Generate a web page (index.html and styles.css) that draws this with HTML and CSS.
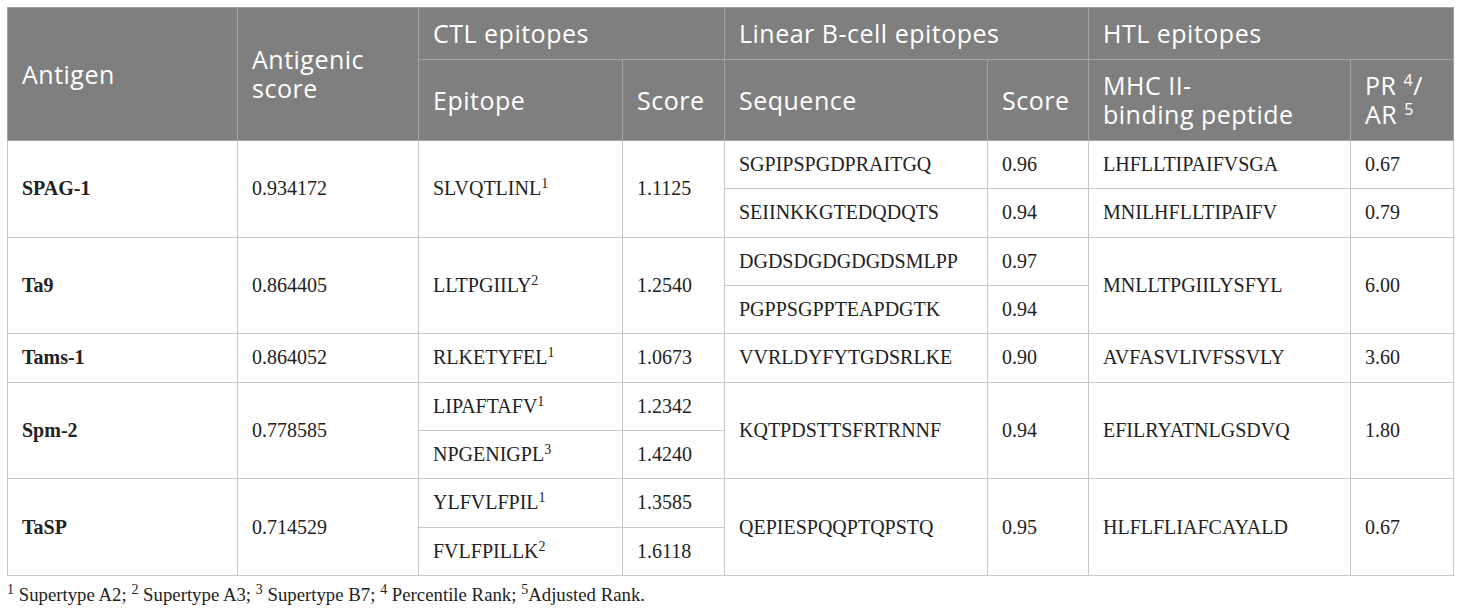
FILE: index.html
```html
<!DOCTYPE html>
<html>
<head>
<meta charset="utf-8">
<link rel="stylesheet" href="styles.css">
</head>
<body>
<div class="wrap">
<table class="tbl">
  <colgroup>
    <col class="c1"><col class="c2"><col class="c3"><col class="c4"><col class="c5"><col class="c6"><col class="c7"><col class="c8">
  </colgroup>
  <thead>
    <tr class="h1">
      <th rowspan="2">Antigen</th>
      <th rowspan="2">Antigenic score</th>
      <th colspan="2">CTL epitopes</th>
      <th colspan="2">Linear B-cell epitopes</th>
      <th colspan="2">HTL epitopes</th>
    </tr>
    <tr class="h2">
      <th>Epitope</th>
      <th>Score</th>
      <th>Sequence</th>
      <th>Score</th>
      <th>MHC II-<br>binding peptide</th>
      <th>PR <sup>4</sup>/ AR <sup>5</sup></th>
    </tr>
  </thead>
  <tbody>
    <tr>
      <td rowspan="2" class="b">SPAG-1</td>
      <td rowspan="2">0.934172</td>
      <td rowspan="2">SLVQTLINL<sup>1</sup></td>
      <td rowspan="2">1.1125</td>
      <td>SGPIPSPGDPRAITGQ</td>
      <td>0.96</td>
      <td>LHFLLTIPAIFVSGA</td>
      <td>0.67</td>
    </tr>
    <tr>
      <td>SEIINKKGTEDQDQTS</td>
      <td>0.94</td>
      <td>MNILHFLLTIPAIFV</td>
      <td>0.79</td>
    </tr>
    <tr>
      <td rowspan="2" class="b">Ta9</td>
      <td rowspan="2">0.864405</td>
      <td rowspan="2">LLTPGIILY<sup>2</sup></td>
      <td rowspan="2">1.2540</td>
      <td>DGDSDGDGDGDSMLPP</td>
      <td>0.97</td>
      <td rowspan="2">MNLLTPGIILYSFYL</td>
      <td rowspan="2">6.00</td>
    </tr>
    <tr>
      <td>PGPPSGPPTEAPDGTK</td>
      <td>0.94</td>
    </tr>
    <tr>
      <td class="b">Tams-1</td>
      <td>0.864052</td>
      <td>RLKETYFEL<sup>1</sup></td>
      <td>1.0673</td>
      <td>VVRLDYFYTGDSRLKE</td>
      <td>0.90</td>
      <td>AVFASVLIVFSSVLY</td>
      <td>3.60</td>
    </tr>
    <tr>
      <td rowspan="2" class="b">Spm-2</td>
      <td rowspan="2">0.778585</td>
      <td>LIPAFTAFV<sup>1</sup></td>
      <td>1.2342</td>
      <td rowspan="2">KQTPDSTTSFRTRNNF</td>
      <td rowspan="2">0.94</td>
      <td rowspan="2">EFILRYATNLGSDVQ</td>
      <td rowspan="2">1.80</td>
    </tr>
    <tr>
      <td>NPGENIGPL<sup>3</sup></td>
      <td>1.4240</td>
    </tr>
    <tr>
      <td rowspan="2" class="b">TaSP</td>
      <td rowspan="2">0.714529</td>
      <td>YLFVLFPIL<sup>1</sup></td>
      <td>1.3585</td>
      <td rowspan="2">QEPIESPQQPTQPSTQ</td>
      <td rowspan="2">0.95</td>
      <td rowspan="2">HLFLFLIAFCAYALD</td>
      <td rowspan="2">0.67</td>
    </tr>
    <tr>
      <td>FVLFPILLK<sup>2</sup></td>
      <td>1.6118</td>
    </tr>
  </tbody>
</table>
<p class="note"><sup>1</sup> Supertype A2; <sup>2</sup> Supertype A3; <sup>3</sup> Supertype B7; <sup>4</sup> Percentile Rank; <sup>5</sup>Adjusted Rank.</p>
</div>
</body>
</html>
```

FILE: styles.css
```css
html, body {
  margin: 0;
  padding: 0;
  background: #ffffff;
}
.wrap {
  padding: 7px 0 0 7px;
}
.tbl {
  border-collapse: collapse;
  table-layout: fixed;
  width: 1446px;
  border: 1px solid #c8c8c8;
}
.c1 { width: 230px; }
.c2 { width: 181px; }
.c3 { width: 204px; }
.c4 { width: 102px; }
.c5 { width: 263px; }
.c6 { width: 101px; }
.c7 { width: 262px; }
.c8 { width: 103px; }
.tbl th {
  background: #7f7f7f;
  color: #ffffff;
  font-family: "Open Sans", "Liberation Sans", sans-serif;
  font-weight: 400;
  font-size: 25px;
  line-height: 29px;
  letter-spacing: 0.5px;
  text-align: left;
  vertical-align: middle;
  padding: 0 14px;
  border: 1px solid #a3a3a3;
}
.tbl th sup {
  font-size: 16px;
  line-height: 0;
  vertical-align: 9px;
}
.h1 th { height: 51px; }
.h2 th { height: 80px; }
.tbl td {
  font-family: "Liberation Serif", "Times New Roman", serif;
  font-size: 20px;
  color: #222222;
  padding: 0 14px;
  height: 47.33px;
  border: 1px solid #c8c8c8;
  vertical-align: middle;
}
.tbl td.b { font-weight: 700; }
.tbl td sup {
  font-size: 14px;
  line-height: 0;
  vertical-align: 7px;
}
.note {
  margin: 8px 0 0 0;
  font-family: "Liberation Serif", "Times New Roman", serif;
  font-size: 18.8px;
  color: #222222;
}
.note sup {
  font-size: 14px;
  line-height: 0;
  vertical-align: 7px;
}
```
